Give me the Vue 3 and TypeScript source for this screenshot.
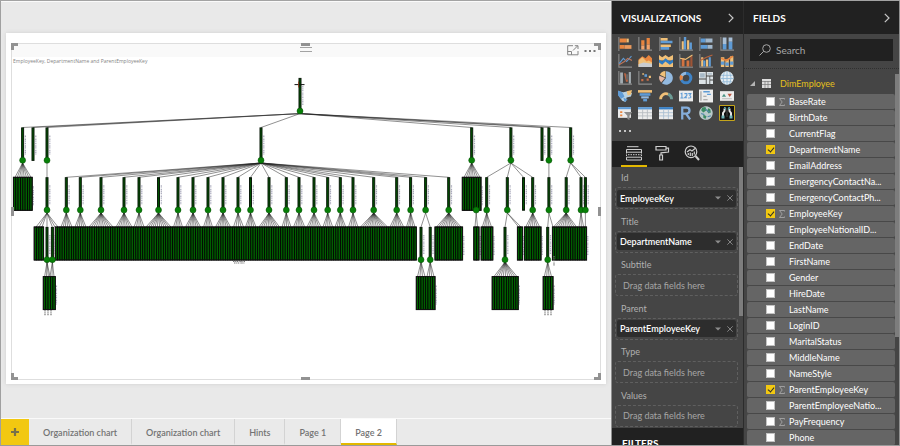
<script setup lang="ts">
import { ref } from 'vue'

type Shape = [d: string, color: string, stroke?: number]
interface Icon { name: string; shapes: Shape[] }
interface Field { name: string; label: string; sum?: boolean; checked?: boolean }
interface Fan { x: number; y: number; to: number[]; ty: number }
interface Block { x1: number; x2: number; y: number }

const ORANGE = '#e8853f'
const TAN = '#f0c078'
const BLUE = '#5f9bd5'
const PALE = '#93b9df'
const AXIS = '#8c8c8c'
const WHITE = '#ececec'
const axes = 'M.8 0V12.2H13'

const icons: Icon[] = [
  { name: 'Stacked bar chart', shapes: [['M.8 0V13', AXIS, 1], ['M1.5 1.5H8V5H1.5zM1.5 7.5H6V11H1.5z', ORANGE], ['M8 1.5h2V5H8z', TAN], ['M6 7.5h6.5V11H6z', '#e99a5d']] },
  { name: 'Stacked column chart', shapes: [[axes, AXIS, 1], ['M3 3h3v5H3zM8 1h3v6H8z', ORANGE], ['M3 8h3v3.5H3zM8 7h3v4.5H8z', '#f2a36c']] },
  { name: 'Clustered bar chart', shapes: [['M.8 0V13', AXIS, 1], ['M1.5 1H8V3.4H1.5zM1.5 7H11V9.4H1.5z', TAN], ['M1.5 3.4h11v2.4h-11zM1.5 9.4h8v2.4h-8z', BLUE]] },
  { name: 'Clustered column chart', shapes: [[axes, AXIS, 1], ['M2.5 4h2v7.6h-2zM7.5 3h2v8.6h-2z', TAN], ['M4.5 0h2.2v11.6H4.5zM9.7 5H12v6.6H9.7z', BLUE]] },
  { name: '100% stacked bar chart', shapes: [['M.8 0V13', AXIS, 1], ['M1.5 1.5H6V5H1.5zM1.5 7.5H8V11H1.5z', BLUE], ['M6 1.5h6.5V5H6zM8 7.5h4.5V11H8z', '#a3b8cc']] },
  { name: '100% stacked column chart', shapes: [[axes, AXIS, 1], ['M2.5 .5h3.5v6H2.5zM8 .5h3.5v4H8z', '#a9bfd6'], ['M2.5 6.5h3.5v5H2.5zM8 4.5h3.5v7H8z', BLUE]] },
  { name: 'Line chart', shapes: [[axes, AXIS, 1], ['M1 9L5 4L8 7L12.5 2', BLUE, 1], ['M1 10L6 7L9 4L13 6', '#bd7559', 1]] },
  { name: 'Area chart', shapes: [['M.5 11V5L4 2l3 2 3-3 3 3v7z', ORANGE], ['M.5 12V6L4 3l4 4 2-1 3 2v4z', TAN], ['M.5 12V9.5L5 8l8 1v3z', '#c8ccd0']] },
  { name: 'Stacked area chart', shapes: [['M0 6V1l3 2 3-2 3 2 4-2v5z', TAN], ['M0 12V5l3 2 3-3 4 3 3-2v7z', '#2f7bc3'], ['M0 12V8l3 2 3-3 4 3 3-2v4z', TAN]] },
  { name: 'Line and stacked column chart', shapes: [[axes, AXIS, 1], ['M2.5 4h2.6v7.6H2.5zM7 6h2.6v5.6H7z', '#d37340'], ['M10.5 2h2v9.6h-2z', '#9e5436'], ['M1 4L6 5L12.5 1', TAN, 1]] },
  { name: 'Line and clustered column chart', shapes: [[axes, AXIS, 1], ['M2 3h2v8.6H2zM6.5 5h2v6.6h-2z', TAN], ['M4 6h2v5.6H4zM9 3h2v8.6H9z', BLUE], ['M1 6L7 3L12.5 1', '#b7633e', 1]] },
  { name: 'Ribbon chart', shapes: [['M.8 3H4v9H.8zM5 5h3.2v7H5zM9.4 2h3v10h-3z', TAN], ['M.8 7H4v3H.8zM5 8h3.2v3H5zM9.4 7h3v3h-3z', BLUE], ['M1 4L6 6L12 2', ORANGE, 1.6]] },
  { name: 'Waterfall chart', shapes: [[axes, AXIS, 1], ['M2 1.5h2.6v10H2zM10 1h2v10.5h-2z', '#a5adb2'], ['M5.5 2h1.6l2 6v2H7.4z', '#b86443'], ['M7.5 3h2v5h-2z', '#666']] },
  { name: 'Scatter chart', shapes: [[axes, AXIS, 1], ['M3 7.5h2v2H3zM8 7h2v2H8z', '#c86d47'], ['M6 3h2.4v2.4H6z', BLUE], ['M10 4.5h2v2h-2zM4 2h1.5v1.5H4z', TAN]] },
  { name: 'Pie chart', shapes: [['M6.5 6.5V.3A6.2 6.2 0 1 1 2.7 11.3z', PALE], ['M6 6V0A6 6 0 0 0 .8 3.4z', TAN], ['M5.6 6.6L.4 4.4A6 6 0 0 0 2 10.6z', '#e6b6a2']] },
  { name: 'Donut chart', shapes: [['M6.5 2A4.5 4.5 0 1 1 2 6.5', '#3f83c6', 2.8], ['M2 6.5A4.5 4.5 0 0 1 6.5 2', PALE, 2.8], ['M2.3 8.2A4.5 4.5 0 0 1 2.6 4.3', ORANGE, 2.8]] },
  { name: 'Treemap', shapes: [['M0 1h6.3v6H0zM0 7.8h6.3V12H0zM7.1 1H13v3.2H7.1zM7.1 5h2.6v7H7.1zM10.4 5H13v3h-2.6zM10.4 8.8H13V12h-2.6z', '#dde3e6'], ['M1 2h4.3v4H1zM8 2h4v1.3H8z', '#a7b9c6']] },
  { name: 'Map', shapes: [['M6.5.3A6.2 6.2 0 1 1 6.4.3z', '#e5edf2'], ['M1 4H12M.5 7H12.5M2 10H11M6.5 0V13M4 1Q1.5 6.5 4 12M9 1Q11.5 6.5 9 12', '#91b9d7', 0.8]] },
  { name: 'Filled map', shapes: [['M0 2l5 1 4-1 4 2-1 3-4 1-1 4-3-1-3-4z', '#b7d1e2'], ['M0 1.5L4 3l2 4-3 2L0 6z', BLUE], ['M8 2l5-1-1 4-3 1z', TAN], ['M5 8l4 2-3 2z', BLUE]] },
  { name: 'Funnel', shapes: [['M0 1h13v2.4H0z', TAN], ['M1.5 3.9h10v2.4h-10z', BLUE], ['M3 6.8h7v2H3z', PALE], ['M4.8 9.3h3.6v2.2H4.8z', BLUE]] },
  { name: 'Gauge', shapes: [['M1.5 9.5A5 5 0 0 1 8.5 4.8', TAN, 2.6], ['M8.5 4.8A5 5 0 0 1 11.7 9.5', '#6d9b94', 2.6]] },
  { name: 'Card', shapes: [['M0 1.5h13v10H0z', WHITE], ['M1.5 4.5L2.7 4V8M1.3 8.3H4M5 4.3H7.3V6L5.2 8.2H7.5M8.6 4.3H11L10 6Q12.7 8.5 8.5 8.3', BLUE, 1]] },
  { name: 'Multi-row card', shapes: [['M0 .5h13v12H0z', WHITE], ['M1.8 2V11M4 6.8H7M4 10H8', '#999', 1], ['M4 2.5H10M7.5 5H11', BLUE, 1.3]] },
  { name: 'KPI', shapes: [['M0 2h13v9H0z', WHITE], ['M1.7 7.3L3.7 4.5l2 2.8z', '#4b9384'], ['M7 4.5h4L9 7.5z', '#ba5540'], ['M2 9H11', '#b5b5b5', 0.8]] },
  { name: 'Slicer', shapes: [['M0 1h12v10H0z', WHITE], ['M0 1h12v2H0z', BLUE], ['M2 4.8h2v1.6H2zM2 8h2v1.6H2z', ORANGE], ['M5.5 5.5h8L10.7 9v4l-2-1V9z', '#8b8b8b']] },
  { name: 'Table', shapes: [['M0 1h13v11.3H0z', WHITE], ['M0 1h13v2.2H0z', BLUE], ['M0 6.2H13M0 9.2H13M4.3 3V12M8.7 3V12', '#b6bbc0', 0.8]] },
  { name: 'Matrix', shapes: [['M0 1h13v11.3H0z', WHITE], ['M0 1h13v2.2H0z', '#387fc5'], ['M0 6.2H13M0 9.2H13M4.3 3V12M8.7 3V12', '#a8bfd3', 0.8]] },
  { name: 'R script visual', shapes: [['M3 12.5V1.5H7A2.7 2.7 0 0 1 7 7H3M6.5 7L10.3 12.5', '#84addb', 2.1]] },
  { name: 'ArcGIS map', shapes: [['M6.5.2A6.3 6.3 0 1 1 6.4.2z', '#b9c9ca'], ['M3 1.5l3-.5 1 3-3 2-2-2zM8.5 2l2 1 .5 3-2 1-1.500-2zM4 8l3 1.500-1 2.500-2-1z', '#3c8b62'], ['M2 7l3 1M6 3l4 3M8 10l3-1', '#5389aa', 1]] },
]

const tree: Icon = {
  name: 'Organization chart',
  shapes: [
    ['M.5.5h15v15H.5z', '#111'],
    ['M.5.5h15v15H.5z', '#c4a51c', 1],
    ['M5.500 3.500V6L4 8V11M10.500 3.500V6L12 8V11', '#e4e4e4', 2],
    ['M5 2.500H6.500V5M11 2.500H9.500V5', '#55a7a9', 1],
    ['M2.500 10.500h3V13.500h-3zM10.500 10.500h3V13.500h-3z', '#6fb3b8'],
    ['M7.500 3h1v9h-1z', '#484848'],
  ],
}

const wells = [
  { label: 'Id', value: 'EmployeeKey' },
  { label: 'Title', value: 'DepartmentName' },
  { label: 'Subtitle', value: '' },
  { label: 'Parent', value: 'ParentEmployeeKey' },
  { label: 'Type', value: '' },
  { label: 'Values', value: '' },
]

const fields = ref<Field[]>([
  { name: 'BaseRate', label: 'BaseRate', sum: true },
  { name: 'BirthDate', label: 'BirthDate' },
  { name: 'CurrentFlag', label: 'CurrentFlag' },
  { name: 'DepartmentName', label: 'DepartmentName', checked: true },
  { name: 'EmailAddress', label: 'EmailAddress' },
  { name: 'EmergencyContactName', label: 'EmergencyContactNa...' },
  { name: 'EmergencyContactPhone', label: 'EmergencyContactPh...' },
  { name: 'EmployeeKey', label: 'EmployeeKey', sum: true, checked: true },
  { name: 'EmployeeNationalID', label: 'EmployeeNationalID...' },
  { name: 'EndDate', label: 'EndDate' },
  { name: 'FirstName', label: 'FirstName' },
  { name: 'Gender', label: 'Gender' },
  { name: 'HireDate', label: 'HireDate' },
  { name: 'LastName', label: 'LastName' },
  { name: 'LoginID', label: 'LoginID' },
  { name: 'MaritalStatus', label: 'MaritalStatus' },
  { name: 'MiddleName', label: 'MiddleName' },
  { name: 'NameStyle', label: 'NameStyle' },
  { name: 'ParentEmployeeKey', label: 'ParentEmployeeKey', sum: true, checked: true },
  { name: 'ParentEmployeeNationalID', label: 'ParentEmployeeNatio...' },
  { name: 'PayFrequency', label: 'PayFrequency', sum: true },
  { name: 'Phone', label: 'Phone' },
])

const pages = ['Organization chart', 'Organization chart', 'Hints', 'Page 1', 'Page 2']
const activePage = ref(4)
const search = ref('')

/* Organization tree: each level is a row of 33-unit bars, leaves sit 2.3 units apart. */
const STEP = 2.3
const L1 = 127.5
const L2 = 177.3
const L3 = 227
const L4 = 276.6
const BAR = 33

const spread = (a: number, b: number): number[] => {
  const n = Math.max(1, Math.round((b - a) / STEP))
  return Array.from({ length: n + 1 }, (_, i) => a + ((b - a) * i) / n)
}

const managers: [x: number, from: number, to: number][] = [
  [66.3, 61, 72], [80.3, 75, 86], [101, 89, 113], [124, 116, 132], [139, 134, 144],
  [158.5, 146, 171], [178, 173.5, 182.5], [193, 185.5, 200.5], [208, 203.5, 212.5],
  [223, 215.5, 230.5], [238, 233.5, 243.5], [250.5, 245.5, 256], [269, 259, 279.5],
  [286.3, 282, 291], [299, 293.5, 304.7], [314, 307, 321], [327.7, 323, 332.7],
  [340.3, 335, 345.7], [353, 348.5, 358], [373.7, 360.5, 387.5], [396.7, 390, 403.7],
  [410.6, 406.5, 415], [448.7, 436.5, 461],
]

const fans: Fan[] = [
  { x: 300, y: 113.6, to: [22.6, 33, 47, 261, 471.7, 510.9, 542, 548.9, 570.7], ty: L1 },
  { x: 261, y: 163, to: [...managers.map((m) => m[0]), 425.6], ty: L2 },
  { x: 22.6, y: 163, to: spread(15, 31), ty: L2 },
  { x: 47, y: 160, to: [47], ty: L2 },
  { x: 471.7, y: 163, to: spread(464, 480), ty: L2 },
  { x: 510.9, y: 163, to: [486.7, 507.3, 523.5, 532.7], ty: L2 },
  { x: 548.9, y: 163, to: [548.9], ty: L2 },
  { x: 570.7, y: 163, to: [566.2, 581, 585.4], ty: L2 },
  ...managers.map((m) => ({ x: m[0], y: 213, to: spread(m[1], m[2]), ty: L3 })),
  { x: 47, y: 213, to: [36, 39, 42, 47, 52.4, 55, 58], ty: L3 },
  { x: 425.6, y: 213, to: [421, 430.2], ty: L3 },
  { x: 476.2, y: 213, to: [475, 477.5], ty: L3 },
  { x: 486.7, y: 213, to: spread(482.3, 491.5), ty: L3 },
  { x: 507.3, y: 213, to: [505, 518.6, 521], ty: L3 },
  { x: 532.7, y: 213, to: spread(525.7, 539.7), ty: L3 },
  { x: 548.9, y: 213, to: [547.7, 553], ty: L3 },
  { x: 566.2, y: 213, to: spread(553.5, 576.5), ty: L3 },
  { x: 581, y: 213, to: [579, 581.3, 583.6], ty: L3 },
  { x: 585.4, y: 213, to: [585.4], ty: L3 },
  { x: 47, y: 262, to: [44.6, 46.5, 48.4, 50], ty: L4 },
  { x: 52.4, y: 262, to: [50, 52, 54], ty: L4 },
  { x: 421, y: 262, to: spread(417.5, 425), ty: L4 },
  { x: 430.2, y: 262, to: spread(427, 434), ty: L4 },
  { x: 505, y: 262, to: spread(494, 517), ty: L4 },
  { x: 547.7, y: 262, to: spread(544.3, 551.5), ty: L4 },
]

const blocks: Block[] = [
  { x1: 13.4, x2: 32.2, y: L2 }, { x1: 462.3, x2: 481, y: L2 },
  { x1: 34.2, x2: 43.6, y: L3 }, { x1: 55.3, x2: 416.3, y: L3 },
  { x1: 435, x2: 462.6, y: L3 }, { x1: 473.8, x2: 479, y: L3 },
  { x1: 481.2, x2: 492.8, y: L3 }, { x1: 517.4, x2: 522.6, y: L3 },
  { x1: 524.4, x2: 541, y: L3 }, { x1: 552.4, x2: 586.6, y: L3 },
  { x1: 43.3, x2: 55.3, y: L4 }, { x1: 416.3, x2: 435, y: L4 },
  { x1: 492.2, x2: 518.2, y: L4 }, { x1: 543.2, x2: 553, y: L4 },
]

const leaves = blocks.flatMap((b) => {
  const n = Math.round((b.x2 - b.x1) / STEP)
  const w = (b.x2 - b.x1) / n
  return Array.from({ length: n }, (_, i) => ({ x: b.x1 + i * w, y: b.y, w }))
})

const bars: [number, number][] = [
  [300, 78], ...[22.6, 33, 47, 261, 471.7, 510.9, 542, 548.9, 570.7].map((x): [number, number] => [x, L1]),
  ...managers.map((m): [number, number] => [m[0], L2]),
  ...[47, 425.6, 486.7, 507.3, 523.5, 532.7, 548.9, 566.2, 581, 585.4].map((x): [number, number] => [x, L2]),
  ...[47, 52.4, 421, 430.2, 505, 547.7].map((x): [number, number] => [x, L3]),
]

const dots: [number, number][] = [
  [300, 111], ...[22.6, 47, 261, 471.7, 510.9, 548.9, 570.7].map((x): [number, number] => [x, 160.3]),
  ...managers.map((m): [number, number] => [m[0], 210]),
  ...[47, 425.6, 476.2, 486.7, 507.3, 532.7, 548.9, 581, 585.4, 566.2].map((x): [number, number] => [x, 210]),
  ...[47, 52.4, 421, 430.2, 505, 547.7].map((x): [number, number] => [x, 259.7]),
]

const marks: [number, number][] = [
  ...bars.map(([x, y]): [number, number] => [x + 2.8, y + 8]),
  ...blocks.filter((b) => b.x2 !== 416.3 && b.x2 !== 43.6).map((b): [number, number] => [b.x2 + 1.2, b.y + 9]),
]
const edgePath = (f: Fan): string => f.to.map((t) => `M${f.x} ${f.y}L${t} ${f.ty}`).join('')
</script>

<template>
  <div class="app">
    <main class="report">
      <div class="canvas">
        <section class="page">
          <article class="visual">
            <header class="visual-head">
              <span class="grip"></span>
              <div class="visual-tools">
                <button type="button" aria-label="Focus mode">
                  <svg width="12" height="11" viewBox="0 0 12 11" fill="none" stroke="#858585">
                    <path d="M6 .7H.7V9.8H11V6M.7 6.5H4.5V9.8M6 5.5L10.5 1M7.8.7H11V4" />
                  </svg>
                </button>
                <button type="button" aria-label="More options">
                  <svg width="12" height="11" viewBox="0 0 12 11" fill="#777">
                    <path d="M.5 5h2v2h-2zM5 5h2v2H5zM9.500 5h2v2h-2z" />
                  </svg>
                </button>
              </div>
            </header>
            <h2 class="visual-title">EmployeeKey, DepartmentName and ParentEmployeeKey</h2>
            <svg class="tree" viewBox="12 66 588 313" role="img" aria-label="Organization chart">
              <path v-for="(f, i) in fans" :key="'f' + i" :d="edgePath(f)" class="edge" />
              <path v-for="([x, y], i) in marks" :key="'m' + i" :d="`M${x} ${y}v19`" class="mark" />
              <rect v-for="(l, i) in leaves" :key="'l' + i" :x="l.x" :y="l.y" :width="l.w" :height="BAR" class="leaf" />
              <rect v-for="(b, i) in blocks" :key="'k' + i" :x="b.x1" :y="b.y" :width="b.x2 - b.x1" :height="BAR" class="frame" />
              <rect v-for="([x, y], i) in bars" :key="'b' + i" :x="x - 1" :y="y + 0.4" width="2" height="32.5" class="bar" />
              <circle v-for="([x, y], i) in dots" :key="'d' + i" :cx="x" :cy="y" r="3" class="dot" />
              <path d="M294.500 84.6H304.500" stroke="#111" />
              <path d="M298.500 81.500v6" stroke="#8a3c18" stroke-width="0.8" />
              <path d="M233 261.500h12M234 263h11M45 310v6M48 310v6M51 310v6M545 310v6M548 310v6M551 310v6M554 256v10" class="mark tail" />
            </svg>
            <i class="h tl"></i><i class="h tr"></i><i class="h bl"></i><i class="h br"></i>
            <i class="h top"></i><i class="h bottom"></i><i class="h left"></i><i class="h right"></i>
          </article>
        </section>
      </div>
      <nav class="tabs" aria-label="Pages">
        <button type="button" class="add" aria-label="New page">
          <svg width="8" height="8" viewBox="0 0 8 8"><path d="M4 0V8M0 4H8" stroke="#77704a" stroke-width="2.2" /></svg>
        </button>
        <button
          v-for="(p, i) in pages" :key="i" type="button" class="tab"
          :class="{ active: i === activePage }" @click="activePage = i"
        >{{ p }}</button>
      </nav>
    </main>

    <aside class="pane viz">
      <header class="pane-head">
        <h2>VISUALIZATIONS</h2>
        <button type="button" aria-label="Collapse visualizations">
          <svg width="6" height="10" viewBox="0 0 6 10"><path d="M.8.8L5 5L.8 9.200" fill="none" stroke="#c8c8c8" stroke-width="1.2" /></svg>
        </button>
      </header>
      <div class="gallery">
        <button v-for="ic in icons" :key="ic.name" type="button" :aria-label="ic.name">
          <svg width="14" height="14" viewBox="0 0 13 13">
            <path
              v-for="(s, i) in ic.shapes" :key="i" :d="s[0]" :fill="s[2] ? 'none' : s[1]"
              :stroke="s[2] ? s[1] : 'none'" :stroke-width="s[2] || 0"
            />
          </svg>
        </button>
        <button type="button" :aria-label="tree.name">
          <svg width="16" height="16" viewBox="0 0 16 16">
            <path
              v-for="(s, i) in tree.shapes" :key="i" :d="s[0]" :fill="s[2] ? 'none' : s[1]"
              :stroke="s[2] ? s[1] : 'none'" :stroke-width="s[2] || 0"
            />
          </svg>
        </button>
      </div>
      <button type="button" class="more" aria-label="Import a visual">
        <svg width="12" height="2" viewBox="0 0 12 2" fill="#c4c4c4"><path d="M0 0h2v2H0zM5 0h2v2H5zM10 0h2v2h-2z" /></svg>
      </button>
      <div class="modes">
        <button type="button" class="on" aria-label="Fields">
          <svg width="16" height="15" viewBox="0 0 16 15" fill="none" stroke="#cfcfcf">
            <path d="M1 .7H12.500M.5 3.500H15.500V6.200H.5zM.5 11.200H15.500V14H.5z" />
            <path d="M.5 6V11M15.500 6V11M2 8.700H15" stroke-dasharray="1.500 1" />
          </svg>
        </button>
        <button type="button" aria-label="Format">
          <svg width="16" height="16" viewBox="0 0 16 16" fill="none" stroke="#cfcfcf" stroke-width="1.200">
            <path d="M1 1.500H11V5H1zM11 3.200H13.500V7L6 7.800V10M4.700 10H7.500V15H4.700z" />
          </svg>
        </button>
        <button type="button" aria-label="Analytics">
          <svg width="16" height="16" viewBox="0 0 16 16" fill="none" stroke="#cfcfcf" stroke-width="1.200">
            <circle cx="7" cy="6.800" r="5.800" />
            <path d="M3 7L6 4.700L8 6L11 3.500M4.300 8V10M6.300 7.500V11M8.300 8V11M10.300 6.500V9.500" />
            <path d="M11.500 11L15 15" stroke-width="2" />
          </svg>
        </button>
      </div>
      <div class="wells-area">
        <div class="wells">
          <div v-for="w in wells" :key="w.label" class="well">
            <h3>{{ w.label }}</h3>
            <div class="drop">
              <div v-if="w.value" class="chip">
                <span>{{ w.value }}</span>
                <button type="button" :aria-label="w.value + ' options'">
                  <svg width="6" height="4" viewBox="0 0 6 4"><path d="M0 .5H6L3 3.500z" fill="#8c8c8c" /></svg>
                </button>
                <button type="button" :aria-label="'Remove ' + w.value">
                  <svg width="6" height="6" viewBox="0 0 6 6"><path d="M.3.300L5.700 5.700M5.700.300L.3 5.700" stroke="#8c8c8c" stroke-width="0.9" /></svg>
                </button>
              </div>
              <span v-else class="hint">Drag data fields here</span>
            </div>
          </div>
        </div>
        <div class="track"><div class="thumb viz-thumb"></div></div>
      </div>
      <h2 class="filters">FILTERS</h2>
    </aside>

    <aside class="pane fields">
      <header class="pane-head">
        <h2>FIELDS</h2>
        <button type="button" aria-label="Collapse fields">
          <svg width="6" height="10" viewBox="0 0 6 10"><path d="M.8.8L5 5L.8 9.200" fill="none" stroke="#c8c8c8" stroke-width="1.2" /></svg>
        </button>
      </header>
      <label class="search">
        <svg width="12" height="12" viewBox="0 0 12 12" fill="none" stroke="#a8a8a8"><circle cx="7.500" cy="4.500" r="3.800" /><path d="M4.700 7.300L.5 11.500" /></svg>
        <input v-model="search" type="text" placeholder="Search" aria-label="Search fields" />
      </label>
      <div class="list-area">
        <div class="list">
          <button type="button" class="table-name">
            <svg width="5" height="5" viewBox="0 0 5 5"><path d="M5 0V5H0z" fill="#b5b5b5" /></svg>
            <svg width="9" height="9" viewBox="0 0 9 9">
              <path d="M0 0h9v9H0z" fill="#dedede" />
              <path d="M0 2.500H9M0 5.500H9M3 2V9M6 2V9" stroke="#777" stroke-width="0.700" />
            </svg>
            <span>DimEmployee</span>
          </button>
          <ul>
            <li v-for="f in fields" :key="f.name">
              <label>
                <input v-model="f.checked" type="checkbox" />
                <span class="sum">
                  <svg v-if="f.sum" width="6" height="8" viewBox="0 0 6 8"><path d="M5.500 1.500V.5H.5L3.200 4L.5 7.500H5.500V6.500" fill="none" stroke="#a6a6a6" stroke-width="0.900" /></svg>
                </span>
                <span>{{ f.label }}</span>
              </label>
            </li>
          </ul>
        </div>
        <div class="track"><div class="thumb fields-thumb"></div></div>
      </div>
    </aside>
  </div>
</template>

<style>
body { background: #e9e9e9; }
</style>

<style scoped>
* { box-sizing: border-box; }
.app {
  display: flex;
  height: 100vh;
  border-top: 1px solid #a3a3a3;
  border-bottom: 1px solid #9a9a9a;
  font-family: Lato, "Open Sans", sans-serif;
  font-size: 9px;
  overflow: hidden;
}
button { border: 0; padding: 0; margin: 0; background: none; font: inherit; color: inherit; display: flex; align-items: center; justify-content: center; }
h2, h3, ul { margin: 0; padding: 0; font-size: inherit; font-weight: inherit; list-style: none; }
svg { display: block; }

.report { flex: 1; min-width: 0; display: flex; flex-direction: column; background: #e9e9e9; border-left: 1px solid #a0a0a0; border-right: 1px solid #8f8f8f; }
.canvas { flex: 1; min-height: 0; display: flex; padding: 31px 5px 34px; border-top: 1px solid #fafafa; border-bottom: 1px solid #fafafa; }
.page { flex: 1; min-width: 0; display: flex; padding: 10px 5px 4px; background: #fff; box-shadow: 0 0 4px #cfcfcf; }
.visual { position: relative; flex: 1; min-width: 0; display: flex; flex-direction: column; border: 1px solid #dedede; }
.visual-head { position: relative; height: 13px; flex: none; display: flex; justify-content: flex-end; background: #f9f9f9; }
.grip { position: absolute; left: 50%; top: 3px; width: 12px; height: 5px; margin-left: -6px; border: solid #a3a3a3; border-width: 1px 0; }
.visual-tools { display: flex; gap: 5px; padding-right: 4px; }
.visual-title { height: 9px; flex: none; padding-left: 1px; font-family: "Open Sans", sans-serif; font-size: 5px; line-height: 9px; color: #858585; white-space: nowrap; }
.tree { flex: 1; min-height: 0; width: 100%; }
.edge { fill: none; stroke: #222; stroke-width: 0.5; }
.mark { fill: none; stroke: #a9a9bb; stroke-width: 1.2; stroke-dasharray: 1.500 0.7 0.8 0.6; }
.tail { stroke: #777; }
.leaf { fill: #006000; stroke: #000; stroke-width: 0.8; }
.frame { fill: none; stroke: #111; stroke-width: 1; }
.bar { fill: #005000; stroke: #0a1a0a; stroke-width: 1; }
.dot { fill: #078007; stroke: #064c06; stroke-width: 0.5; }
.h { position: absolute; border: 0 solid #929292; }
.tl, .tr, .bl, .br { width: 7px; height: 7px; }
.tl { left: -1px; top: -1px; border-width: 3px 0 0 3px; }
.tr { right: -1px; top: -1px; border-width: 3px 3px 0 0; }
.bl { left: -1px; bottom: -1px; border-width: 0 0 3px 3px; }
.br { right: -1px; bottom: -1px; border-width: 0 3px 3px 0; }
.top, .bottom { left: 50%; width: 9px; margin-left: -5px; border-top-width: 3px; }
.top { top: -1px; }
.bottom { bottom: -1px; }
.left, .right { top: 50%; height: 9px; margin-top: -5px; border-left-width: 3px; }
.left { left: -1px; }
.right { right: -1px; }

.tabs { flex: none; height: 26px; display: flex; background: #eaeaea; color: #737373; font-weight: 600; }
.add { width: 28px; background: #f2c811; }
.tab { padding: 2px 14px 0; border-right: 1px solid #d3d3d3; border-bottom: 2px solid transparent; white-space: nowrap; }
.active { background: #fff; border-bottom-color: #e3b800; }

.pane { display: flex; flex-direction: column; min-height: 0; background: #454545; color: #e4e4e4; overflow: hidden; }
.viz { width: 132px; flex: none; border-right: 1px solid #2c2c2c; }
.fields { width: 156px; flex: none; border-right: 1px solid #8f8f8f; }
.pane-head { height: 33px; flex: none; display: flex; align-items: center; justify-content: space-between; padding: 0 9px; background: #212121; font-size: 10px; font-weight: 700; color: #fff; }
.gallery { height: 87px; flex: none; display: grid; grid-template-columns: repeat(6, 1fr); grid-auto-rows: 1fr; margin: 1px 6px 0 3px; }
.more { flex: none; height: 19px; padding: 0 0 2px 7px; justify-content: flex-start; }
.modes { flex: none; height: 26px; display: flex; gap: 3px; padding-left: 9px; background: #212121; }
.modes button { width: 26px; border-bottom: 2px solid transparent; }
.modes .on { border-bottom-color: #e3b800; }
.wells-area { flex: 1; min-height: 0; display: flex; }
.wells { flex: 1; min-width: 0; display: grid; grid-auto-rows: 1fr; padding-left: 3px; }
.well h3 { height: 20px; padding: 1px 0 0 6px; line-height: 20px; color: #b0b0b0; }
.drop { height: 22px; display: flex; align-items: center; padding: 1px; border: 1px dashed #5f5f5f; border-radius: 3px; }
.chip { flex: 1; height: 17px; display: flex; align-items: center; gap: 6px; padding: 0 3px; border-radius: 2px; background: #2d2d2d; color: #fff; font-weight: 600; }
.chip span { flex: 1; white-space: nowrap; }
.hint { padding-left: 6px; color: #a6a6a6; }
.track { width: 4px; flex: none; }
.viz .track { margin-left: 1px; }
.thumb { background: #7d7d7d; }
.viz-thumb { height: 57%; }
.fields-thumb { height: 70%; margin-top: 5px; }
.filters { flex: none; height: 17px; padding: 8px 0 0 10px; overflow: hidden; background: #212121; font-size: 10px; line-height: 15px; font-weight: 700; color: #fff; }

.search { flex: none; height: 22px; display: flex; align-items: center; gap: 5px; margin: 5px 6px 7px; padding: 0 9px; background: #212121; }
.search input { flex: 1; min-width: 0; border: 0; padding: 0; outline: 0; background: none; font: inherit; font-size: 10px; color: #ddd; }
.search input::placeholder { color: #a8a8a8; opacity: 1; }
.list-area { flex: 1; min-height: 0; display: flex; border-top: 1px dotted #303030; }
.list { flex: 1; min-width: 0; padding-left: 3px; }
.table-name { height: 25px; gap: 7px; padding: 4px 0 0 3px; color: #e5c01c; }
.table-name span { padding-left: 2px; }
li { height: 16px; border-bottom: 1px solid #484848; background: #656565; border-radius: 2px; }
li label { height: 15px; display: flex; align-items: center; padding-left: 19px; color: #fff; white-space: nowrap; }
li input { appearance: none; flex: none; width: 9px; height: 9px; margin: 0; border: 1px solid #c3c3c3; background: #fff; }
li input:checked { border-color: #f2c811; background: #f2c811; display: grid; place-items: center; }
li input:checked::after { content: ""; width: 3px; height: 5px; margin-top: -1px; border: solid #2b2b2b; border-width: 0 1px 1px 0; transform: rotate(40deg); }
.sum { width: 14px; display: flex; padding-left: 4px; }
</style>
